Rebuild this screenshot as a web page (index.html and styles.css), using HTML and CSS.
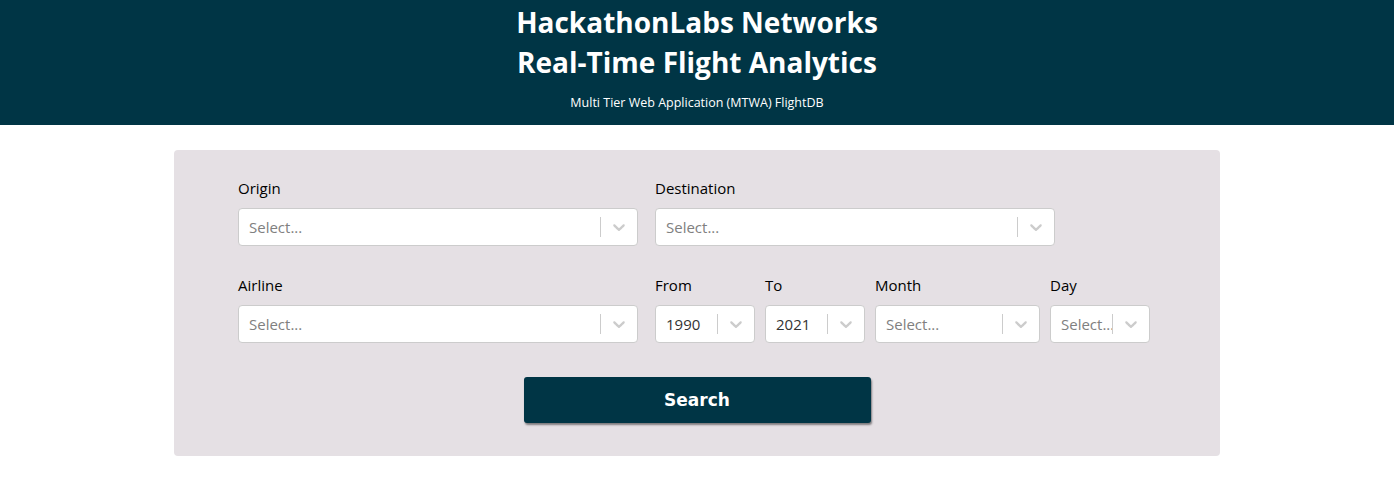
FILE: index.html
```html
<!DOCTYPE html>
<html>
<head>
<meta charset="utf-8">
<link rel="stylesheet" href="styles.css">
</head>
<body>
<header class="hero">
  <h1 class="hero-title">HackathonLabs Networks<br>Real-Time Flight Analytics</h1>
  <p class="hero-sub">Multi Tier Web Application (MTWA) FlightDB</p>
</header>
<main class="main">
  <section class="panel">
    <div class="row">
      <div class="field w400">
        <label class="label">Origin</label>
        <div class="select"><span class="placeholder">Select...</span><span class="sep"></span><span class="chev"><svg width="20" height="20" viewBox="0 0 20 20"><path d="M4.516 7.548c0.436-0.446 1.043-0.481 1.576 0l3.908 3.747 3.908-3.747c0.533-0.481 1.141-0.446 1.574 0 0.436 0.445 0.408 1.197 0 1.615-0.406 0.418-4.695 4.502-4.695 4.502-0.217 0.223-0.502 0.335-0.787 0.335s-0.57-0.112-0.789-0.335c0 0-4.287-4.084-4.695-4.502s-0.436-1.17 0-1.615z"/></svg></span></div>
      </div>
      <div class="field w400 gap17">
        <label class="label">Destination</label>
        <div class="select"><span class="placeholder">Select...</span><span class="sep"></span><span class="chev"><svg width="20" height="20" viewBox="0 0 20 20"><path d="M4.516 7.548c0.436-0.446 1.043-0.481 1.576 0l3.908 3.747 3.908-3.747c0.533-0.481 1.141-0.446 1.574 0 0.436 0.445 0.408 1.197 0 1.615-0.406 0.418-4.695 4.502-4.695 4.502-0.217 0.223-0.502 0.335-0.787 0.335s-0.57-0.112-0.789-0.335c0 0-4.287-4.084-4.695-4.502s-0.436-1.17 0-1.615z"/></svg></span></div>
      </div>
    </div>
    <div class="row row2">
      <div class="field w400">
        <label class="label">Airline</label>
        <div class="select"><span class="placeholder">Select...</span><span class="sep"></span><span class="chev"><svg width="20" height="20" viewBox="0 0 20 20"><path d="M4.516 7.548c0.436-0.446 1.043-0.481 1.576 0l3.908 3.747 3.908-3.747c0.533-0.481 1.141-0.446 1.574 0 0.436 0.445 0.408 1.197 0 1.615-0.406 0.418-4.695 4.502-4.695 4.502-0.217 0.223-0.502 0.335-0.787 0.335s-0.57-0.112-0.789-0.335c0 0-4.287-4.084-4.695-4.502s-0.436-1.17 0-1.615z"/></svg></span></div>
      </div>
      <div class="field w100 gap17">
        <label class="label">From</label>
        <div class="select"><span class="value">1990</span><span class="sep"></span><span class="chev"><svg width="20" height="20" viewBox="0 0 20 20"><path d="M4.516 7.548c0.436-0.446 1.043-0.481 1.576 0l3.908 3.747 3.908-3.747c0.533-0.481 1.141-0.446 1.574 0 0.436 0.445 0.408 1.197 0 1.615-0.406 0.418-4.695 4.502-4.695 4.502-0.217 0.223-0.502 0.335-0.787 0.335s-0.57-0.112-0.789-0.335c0 0-4.287-4.084-4.695-4.502s-0.436-1.17 0-1.615z"/></svg></span></div>
      </div>
      <div class="field w100 gap10">
        <label class="label">To</label>
        <div class="select"><span class="value">2021</span><span class="sep"></span><span class="chev"><svg width="20" height="20" viewBox="0 0 20 20"><path d="M4.516 7.548c0.436-0.446 1.043-0.481 1.576 0l3.908 3.747 3.908-3.747c0.533-0.481 1.141-0.446 1.574 0 0.436 0.445 0.408 1.197 0 1.615-0.406 0.418-4.695 4.502-4.695 4.502-0.217 0.223-0.502 0.335-0.787 0.335s-0.57-0.112-0.789-0.335c0 0-4.287-4.084-4.695-4.502s-0.436-1.17 0-1.615z"/></svg></span></div>
      </div>
      <div class="field w165 gap10">
        <label class="label">Month</label>
        <div class="select"><span class="placeholder">Select...</span><span class="sep"></span><span class="chev"><svg width="20" height="20" viewBox="0 0 20 20"><path d="M4.516 7.548c0.436-0.446 1.043-0.481 1.576 0l3.908 3.747 3.908-3.747c0.533-0.481 1.141-0.446 1.574 0 0.436 0.445 0.408 1.197 0 1.615-0.406 0.418-4.695 4.502-4.695 4.502-0.217 0.223-0.502 0.335-0.787 0.335s-0.57-0.112-0.789-0.335c0 0-4.287-4.084-4.695-4.502s-0.436-1.17 0-1.615z"/></svg></span></div>
      </div>
      <div class="field w100 gap10">
        <label class="label">Day</label>
        <div class="select"><span class="placeholder">Select...</span><span class="sep"></span><span class="chev"><svg width="20" height="20" viewBox="0 0 20 20"><path d="M4.516 7.548c0.436-0.446 1.043-0.481 1.576 0l3.908 3.747 3.908-3.747c0.533-0.481 1.141-0.446 1.574 0 0.436 0.445 0.408 1.197 0 1.615-0.406 0.418-4.695 4.502-4.695 4.502-0.217 0.223-0.502 0.335-0.787 0.335s-0.57-0.112-0.789-0.335c0 0-4.287-4.084-4.695-4.502s-0.436-1.17 0-1.615z"/></svg></span></div>
      </div>
    </div>
    <div class="actions">
      <button class="search-btn">Search</button>
    </div>
  </section>
</main>
</body>
</html>
```

FILE: styles.css
```css
* { box-sizing: border-box; }
body {
  margin: 0;
  font-family: "Open Sans", "Noto Sans", sans-serif;
  background: #ffffff;
  color: #000;
}
.hero {
  background: #003545;
  color: #fff;
  height: 125px;
  display: flex;
  flex-direction: column;
  align-items: center;
  padding-top: 2px;
}
.hero-title {
  margin: 0;
  font-size: 28px;
  line-height: 40px;
  font-weight: 700;
  text-align: center;
}
.hero-sub {
  margin: 12px 0 0;
  font-size: 12.5px;
  line-height: 18px;
}
.main {
  display: flex;
  justify-content: center;
  padding-top: 25px;
}
.panel {
  width: 1046px;
  height: 306px;
  background: #e5e0e4;
  border-radius: 4px;
  padding: 26px 64px 0;
}
.row {
  display: flex;
}
.row2 {
  margin-top: 27px;
}
.field {
  display: flex;
  flex-direction: column;
}
.w400 { width: 400px; }
.w100 { width: 100px; }
.w165 { width: 165px; }
.gap17 { margin-left: 17px; }
.gap10 { margin-left: 10px; }
.label {
  font-size: 15px;
  line-height: 24px;
  margin-bottom: 8px;
}
.select {
  height: 38px;
  background: #fff;
  border: 1px solid #cccccc;
  border-radius: 4px;
  display: flex;
  align-items: center;
  overflow: hidden;
}
.placeholder, .value {
  flex: 1;
  padding-left: 10px;
  font-size: 15px;
  white-space: nowrap;
  overflow: hidden;
}
.placeholder { color: #808080; }
.value { color: #333; }
.sep {
  width: 1px;
  align-self: stretch;
  margin: 8px 0;
  background: #cccccc;
}
.chev {
  width: 36px;
  display: flex;
  justify-content: center;
  align-items: center;
  fill: #cccccc;
}
.actions {
  display: flex;
  justify-content: center;
  margin-top: 34px;
}
.search-btn {
  width: 347px;
  height: 46px;
  background: #003545;
  color: #fff;
  border: none;
  border-radius: 3px;
  font-family: "DejaVu Sans", Verdana, sans-serif;
  font-weight: 700;
  font-size: 17px;
  box-shadow: 1px 2px 2px rgba(0,0,0,0.45);
}
```
